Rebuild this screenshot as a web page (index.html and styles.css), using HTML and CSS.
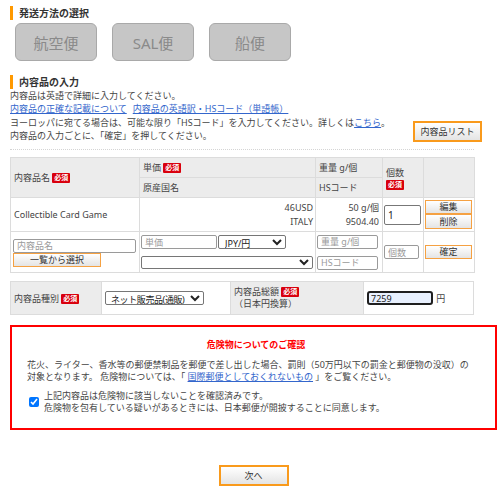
FILE: index.html
```html
<!DOCTYPE html>
<html lang="ja">
<head>
<meta charset="utf-8">
<title>内容品の入力</title>
<link rel="stylesheet" href="styles.css">
</head>
<body>
<div class="page">
  <h2 class="sec-title">発送方法の選択</h2>
  <div class="methods">
    <button class="method">航空便</button>
    <button class="method">SAL便</button>
    <button class="method">船便</button>
  </div>

  <h2 class="sec-title sec2">内容品の入力</h2>
  <div class="intro">
    <div class="intro-text">
      <p>内容品は英語で詳細に入力してください。</p>
      <p><a href="#">内容品の正確な記載について</a><span class="sp"></span><a href="#">内容品の英語訳・HSコード（単語帳）</a></p>
      <p>ヨーロッパに宛てる場合は、可能な限り「HSコード」を入力してください。詳しくは<a href="#">こちら</a>。</p>
      <p>内容品の入力ごとに、「確定」を押してください。</p>
    </div>
    <button class="btn-orange list-btn">内容品リスト</button>
  </div>
  <div class="divider"></div>

  <table class="items">
    <colgroup>
      <col class="c1"><col class="c2"><col class="c3"><col class="c4"><col class="c5">
    </colgroup>
    <tr class="h1">
      <th rowspan="2" class="mid">内容品名 <span class="req">必須</span></th>
      <th>単価 <span class="req">必須</span></th>
      <th>重量 g/個</th>
      <th rowspan="2" class="mid qty-h">個数<br><span class="req">必須</span></th>
      <th rowspan="2"></th>
    </tr>
    <tr class="h2">
      <th>原産国名</th>
      <th>HSコード</th>
    </tr>
    <tr class="data">
      <td>Collectible Card Game</td>
      <td class="num">46USD<br>ITALY</td>
      <td class="num">50 g/個<br>9504.40</td>
      <td class="qty"><input class="inp qty-inp" type="text" value="1"></td>
      <td class="ops">
        <button class="btn-orange small">編集</button>
        <button class="btn-orange small">削除</button>
      </td>
    </tr>
    <tr class="entry">
      <td class="e1">
        <input class="inp name-inp" type="text" placeholder="内容品名">
        <button class="btn-orange pick">一覧から選択</button>
      </td>
      <td class="e2">
        <div class="price-row">
          <input class="inp price-inp" type="text" placeholder="単価">
          <select class="sel cur-sel"><option>JPY/円</option></select>
        </div>
        <select class="sel country-sel"><option></option></select>
      </td>
      <td class="e3">
        <input class="inp w-inp" type="text" placeholder="重量 g/個">
        <input class="inp hs-inp" type="text" placeholder="HSコード">
      </td>
      <td class="qty"><input class="inp qty2-inp" type="text" placeholder="個数"></td>
      <td class="ops"><button class="btn-orange small">確定</button></td>
    </tr>
  </table>

  <table class="kind">
    <tr>
      <th class="k1">内容品種別 <span class="req">必須</span></th>
      <td class="k2"><select class="sel kind-sel"><option>ネット販売品(通販)</option></select></td>
      <th class="k3">内容品総額 <span class="req">必須</span><br>（日本円換算）</th>
      <td class="k4"><input class="inp total-inp" type="text" value="7259"> <span class="yen">円</span></td>
    </tr>
  </table>

  <div class="danger">
    <p class="danger-title">危険物についてのご確認</p>
    <p class="danger-text">花火、ライター、香水等の郵便禁制品を郵便で差し出した場合、罰則（50万円以下の罰金と郵便物の没収）の<br>対象となります。 危険物については、「 <a href="#">国際郵便としておくれないもの</a> 」をご覧ください。</p>
    <label class="agree">
      <input type="checkbox" checked>
      <span>上記内容品は危険物に該当しないことを確認済みです。<br>危険物を包有している疑いがあるときには、日本郵便が開披することに同意します。</span>
    </label>
  </div>

  <div class="next-wrap">
    <button class="btn-orange next">次へ</button>
  </div>
</div>
</body>
</html>
```

FILE: styles.css
```css
* { box-sizing: border-box; }

body {
  margin: 0;
  background: #fff;
  font-family: "Noto Sans", "Noto Sans CJK JP", sans-serif;
  font-size: 9px;
  color: #444;
}

.page {
  padding: 6px 0 0 10px;
  width: 500px;
}

.sec-title {
  margin: 0;
  font-size: 10px;
  font-weight: bold;
  color: #333;
  border-left: 3px solid #f90;
  padding-left: 6px;
  line-height: 14px;
  height: 14px;
}

.sec2 { margin-top: 14px; }

.methods {
  display: flex;
  gap: 15px;
  margin: 3px 0 0 5px;
}

.method {
  width: 82px;
  height: 38px;
  background: #c6c6c6;
  border: 1px solid #a9a9a9;
  border-radius: 6px;
  color: #8a8a8a;
  font-family: inherit;
  font-size: 15px;
  padding: 0;
}

.intro {
  display: flex;
  align-items: flex-end;
  justify-content: space-between;
  width: 472px;
}

.intro-text p {
  margin: 0;
  line-height: 13.3px;
  white-space: nowrap;
}

a { color: #3366cc; }

.sp { display: inline-block; width: 6px; }

.btn-orange {
  font-family: inherit;
  color: #333;
  border: 1px solid #f5a142;
  background: linear-gradient(#ffffff, #e4e4e4);
  padding: 0;
  font-size: 9px;
  cursor: pointer;
}

.list-btn {
  width: 69px;
  height: 21px;
  border: 2px solid #f99a1c;
  font-size: 9px;
}

.divider {
  margin-top: 7px;
  width: 464px;
  border-top: 1px dotted #d4d4d4;
}

table {
  border-collapse: collapse;
  width: 464px;
  table-layout: fixed;
}

th, td {
  border: 1px solid #dcdcdc;
  padding: 0 3px;
  text-align: left;
  font-weight: normal;
  vertical-align: middle;
}

th { background: #ececec; }

.items { margin-top: 7px; }

.c1 { width: 129px; }
.c2 { width: 176px; }
.c3 { width: 67px; }
.c4 { width: 41px; }
.c5 { width: 51px; }

.items .h1 { height: 20px; }
.items .h2 { height: 20px; }
.items .data { height: 34px; }
.items .entry { height: 41px; }

.qty-h { line-height: 12px; padding-top: 2px; }

.req {
  display: inline-block;
  background: #d9000d;
  color: #fff;
  font-size: 7px;
  font-weight: bold;
  line-height: 10px;
  padding: 0 2px;
  border-radius: 1px;
  vertical-align: 1px;
}

.data td { line-height: 14px; }

.num { text-align: right; padding-right: 2px; }
.data td.num:nth-child(3) { padding-right: 3px; }

.qty { padding: 0 1px; }

.inp {
  display: block;
  font-family: inherit;
  font-size: 9px;
  color: #222;
  border: 1px solid #9a9a9a;
  border-radius: 2px;
  padding: 0 3px;
  height: 14px;
  background: #fff;
  outline: none;
}

.inp::placeholder { color: #9a9a9a; }

.qty-inp {
  width: 37px;
  height: 20px;
  border-color: #777;
  font-size: 10px;
}

.ops { padding: 0 1px; }

.small {
  display: block;
  width: 47px;
  height: 14px;
  line-height: 12px;
}

.ops .small + .small { height: 15px; }

.e1 { padding: 0 2px; }
.name-inp { width: 123px; margin-top: 1px; }
.pick {
  display: block;
  width: 88px;
  height: 14px;
  line-height: 12px;
}

.e2 { padding: 0 1px; }
.price-row { display: flex; gap: 1px; align-items: center; }
.price-inp { width: 76px; }

.sel {
  font-family: inherit;
  font-size: 9px;
  line-height: 12px;
  color: #222;
  height: 14px;
  padding: 0 0 0 2px;
  border: 1px solid #767676;
  border-radius: 2px;
  background: #fff;
}

.cur-sel { width: 68px; }
.country-sel { display: block; width: 172px; margin-top: 7px; height: 13px; }

.e3 { padding: 0 1px; }
.w-inp { width: 61px; }
.hs-inp { width: 61px; margin-top: 7px; }

.qty2-inp { width: 35px; margin: 0 auto 0 0; }

.kind { margin-top: 8px; }
.kind tr { height: 33px; }
.k1 { width: 91px; }
.k2 { width: 129px; background: #fff; padding: 0 3px; }
.k3 { width: 133px; line-height: 12px; }
.k4 { background: #fff; padding: 0 3px; white-space: nowrap; }

.kind-sel { width: 99px; height: 14px; padding-left: 1px; letter-spacing: -0.4px; }

.total-inp {
  display: inline-block;
  width: 66px;
  height: 14px;
  border: 2px solid #1f1f1f;
  border-radius: 3px;
  background: #e8f0fe;
  font-size: 9px;
  padding: 0 2px;
  vertical-align: middle;
}

.yen { vertical-align: middle; margin-left: 1px; }

.danger {
  margin-top: 10px;
  width: 487px;
  height: 105px;
  border: 2px solid #f00;
  padding: 12px 10px 0 15px;
}

.danger p { margin: 0; }

.danger-title {
  text-align: center;
  color: #f00;
  font-weight: bold;
  line-height: 12px;
}

.danger-text {
  margin-top: 8px !important;
  line-height: 11.5px;
  white-space: nowrap;
}

.agree {
  display: flex;
  align-items: center;
  gap: 5px;
  margin-top: 8px;
  padding-left: 2px;
  line-height: 12px;
}

.agree input {
  width: 10px;
  height: 10px;
  margin: 0;
}

.next-wrap {
  width: 487px;
  display: flex;
  justify-content: center;
  margin-top: 35px;
}

.next {
  width: 70px;
  height: 21px;
  border: 2px solid #f99a1c;
}
```
